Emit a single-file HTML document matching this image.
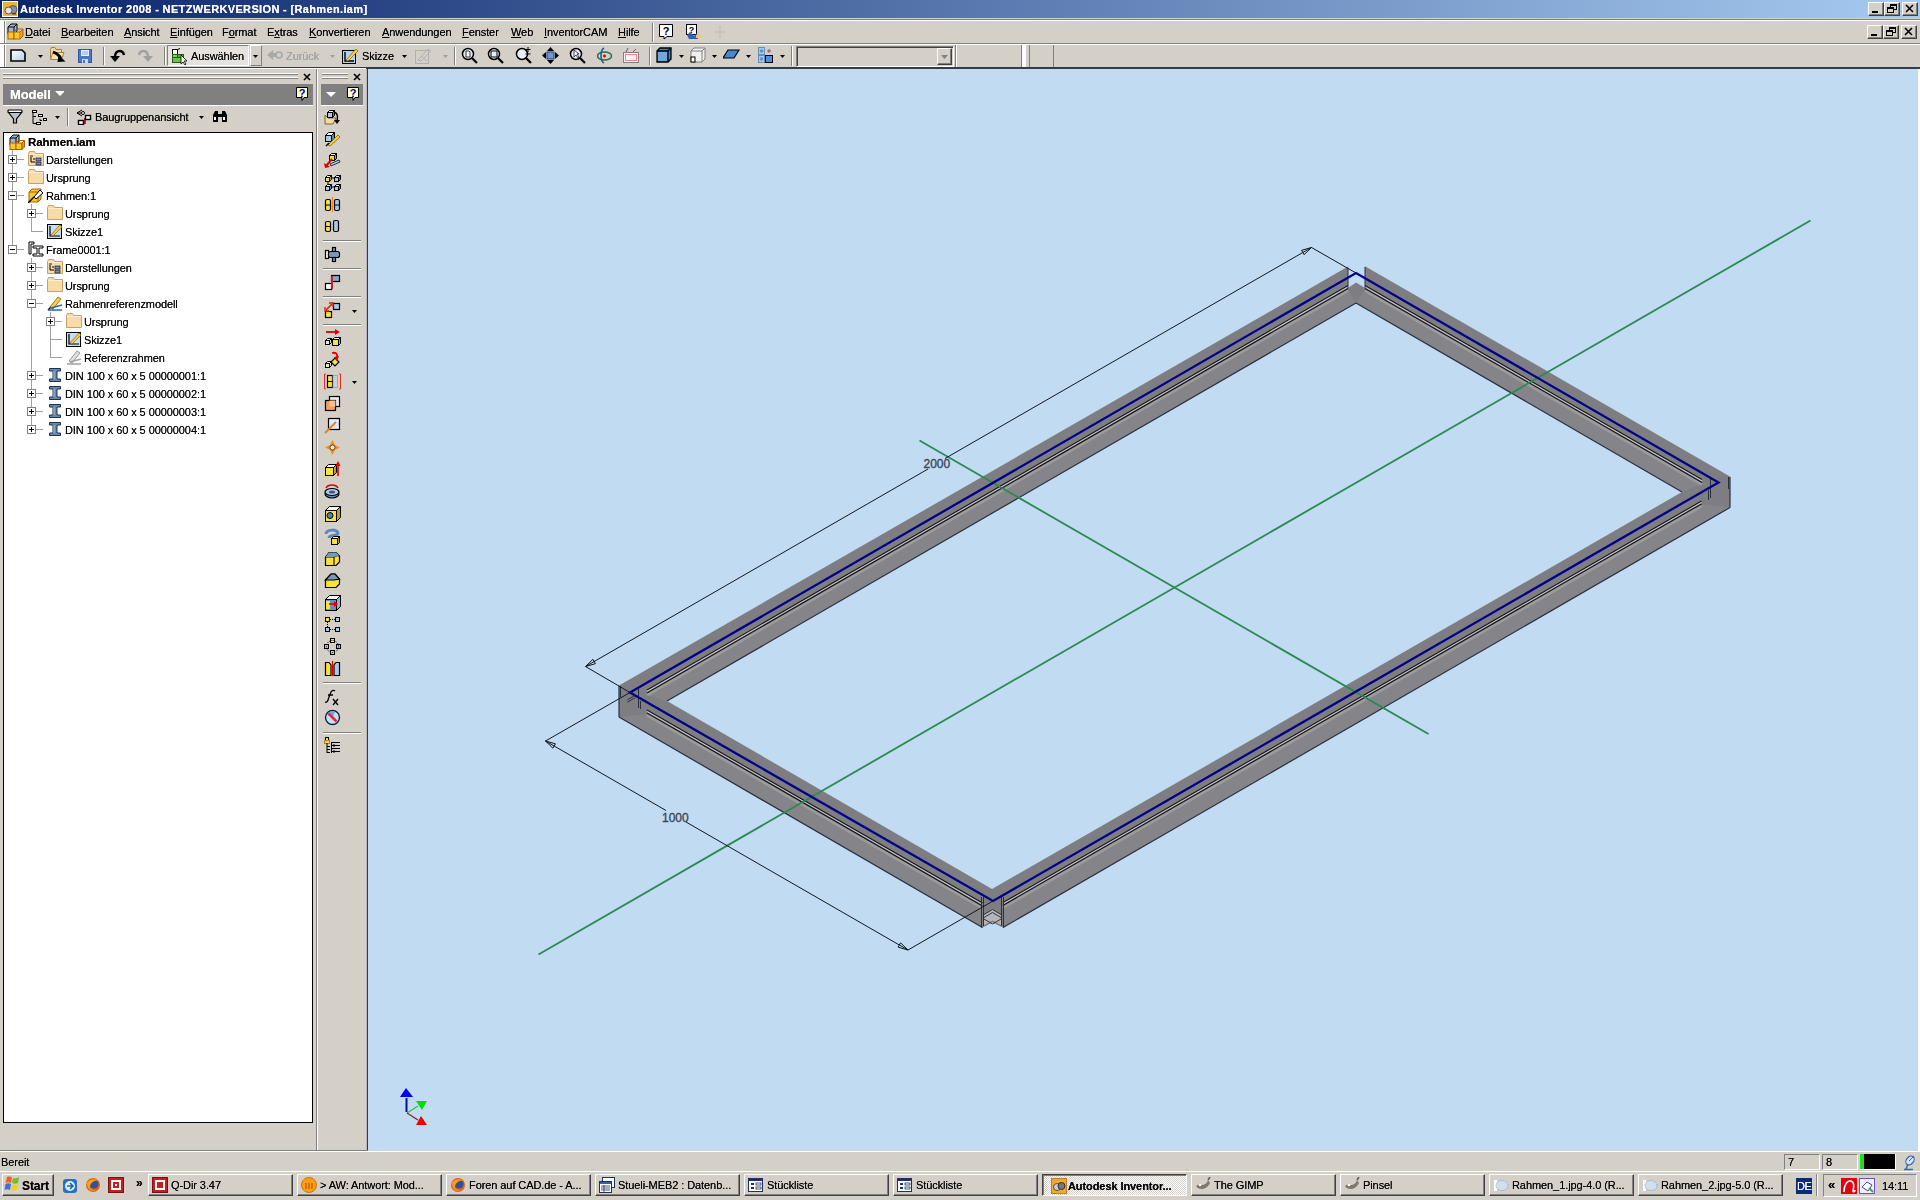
<!DOCTYPE html>
<html><head><meta charset="utf-8">
<style>
*{margin:0;padding:0;box-sizing:border-box}
html,body{width:1920px;height:1200px;overflow:hidden;background:#D4D0C8;font-family:"Liberation Sans",sans-serif;font-size:11px;color:#000}
.a{position:absolute;display:block}
.t{position:absolute;white-space:nowrap;font-size:11px;line-height:13px;letter-spacing:-0.08px}
.ul{text-decoration:underline;text-underline-offset:1px}
.cr{filter:url(#crisp)}
</style></head><body>
<svg width="0" height="0" style="position:absolute"><filter id="crisp" x="0" y="0" width="100%" height="100%"><feComponentTransfer><feFuncA type="table" tableValues="0 0.75 1"/></feComponentTransfer></filter></svg>
<div class="a" style="left:0px;top:0px;width:1920px;height:18px;background:linear-gradient(to right,#0A246A 0%,#A6CAF0 100%)"></div>
<svg class="a" style="left:2px;top:1px;" width="16" height="16" viewBox="0 0 16 16"><rect x="0.5" y="0.5" width="15" height="15" fill="#F0B030" stroke="#fff"/><circle cx="11" cy="8.5" r="4" fill="#8890A0" stroke="#505860"/><circle cx="6.5" cy="9.5" r="3.5" fill="#E8E0F0" stroke="#605070"/><rect x="10" y="12" width="4" height="1.5" fill="#604010"/></svg>
<div class="t cr" style="left:20px;top:3px;color:#fff;font-weight:bold;letter-spacing:0.35px">Autodesk Inventor 2008 - NETZWERKVERSION - [Rahmen.iam]</div>
<div class="a" style="left:1868px;top:2px;width:16px;height:14px;background:#D4D0C8;border-top:1px solid #fff;border-left:1px solid #fff;border-right:1px solid #404040;border-bottom:1px solid #404040"></div>
<div class="a" style="left:1869px;top:14px;width:14px;height:1px;background:#808080"></div>
<div class="a" style="left:1882px;top:3px;width:1px;height:12px;background:#808080"></div>
<div class="a" style="left:1872px;top:11px;width:6px;height:2px;background:#000"></div>
<div class="a" style="left:1884px;top:2px;width:16px;height:14px;background:#D4D0C8;border-top:1px solid #fff;border-left:1px solid #fff;border-right:1px solid #404040;border-bottom:1px solid #404040"></div>
<div class="a" style="left:1885px;top:14px;width:14px;height:1px;background:#808080"></div>
<div class="a" style="left:1898px;top:3px;width:1px;height:12px;background:#808080"></div>
<svg class="a" style="left:1887px;top:4px;" width="10" height="9" viewBox="0 0 10 9"><rect x="3.5" y="0.5" width="6" height="5" fill="none" stroke="#000"/><rect x="3" y="1" width="7" height="1" fill="#000"/><rect x="0.5" y="3.5" width="6" height="5" fill="#D4D0C8" stroke="#000"/><rect x="0" y="4" width="7" height="1" fill="#000"/></svg>
<div class="a" style="left:1902px;top:2px;width:16px;height:14px;background:#D4D0C8;border-top:1px solid #fff;border-left:1px solid #fff;border-right:1px solid #404040;border-bottom:1px solid #404040"></div>
<div class="a" style="left:1903px;top:14px;width:14px;height:1px;background:#808080"></div>
<div class="a" style="left:1916px;top:3px;width:1px;height:12px;background:#808080"></div>
<svg class="a" style="left:1905px;top:4px;" width="10" height="9" viewBox="0 0 10 9"><path d="M1 1 L8 8 M8 1 L1 8" stroke="#000" stroke-width="1.6"/></svg>
<div class="a" style="left:0px;top:18px;width:1920px;height:1px;background:#D4D0C8"></div>
<div class="a" style="left:0px;top:19px;width:1920px;height:1px;background:#808080"></div>
<div class="a" style="left:0px;top:20px;width:1920px;height:1px;background:#fff"></div>
<div class="a" style="left:0px;top:21px;width:4px;height:47px;background:#fff"></div>
<div class="a" style="left:4px;top:21px;width:1px;height:23px;background:#808080"></div>
<div class="a" style="left:5px;top:21px;width:1px;height:23px;background:#fff"></div>
<div class="a" style="left:4px;top:45px;width:1px;height:22px;background:#808080"></div>
<div class="a" style="left:5px;top:45px;width:1px;height:22px;background:#fff"></div>
<div class="a" style="left:0px;top:43px;width:1920px;height:1px;background:#808080"></div>
<div class="a" style="left:0px;top:44px;width:1920px;height:1px;background:#fff"></div>
<svg class="a" style="left:7px;top:23px;" width="17" height="17" viewBox="0 0 17 17"><path d="M1 4 L4 1 L10 1 L10 8 L7 11 L1 11 Z" fill="#9CB8D8" stroke="#000"/><path d="M1 4 L7 4 L7 11 M7 4 L10 1" fill="none" stroke="#000"/><rect x="1" y="9" width="6" height="7" fill="#F8C830" stroke="#B06000"/><rect x="7" y="9" width="6" height="7" fill="#F8C830" stroke="#B06000"/><path d="M13 9 L16 6 L16 13 L13 16" fill="#E0A020" stroke="#B06000"/><path d="M7 9 L10 6 L16 6" fill="none" stroke="#B06000"/></svg>
<div class="t cr" style="left:25px;top:26px;"><span class="ul">D</span>atei</div>
<div class="t cr" style="left:61px;top:26px;"><span class="ul">B</span>earbeiten</div>
<div class="t cr" style="left:124px;top:26px;"><span class="ul">A</span>nsicht</div>
<div class="t cr" style="left:170px;top:26px;"><span class="ul">E</span>infügen</div>
<div class="t cr" style="left:222px;top:26px;">F<span class="ul">o</span>rmat</div>
<div class="t cr" style="left:267px;top:26px;">E<span class="ul">x</span>tras</div>
<div class="t cr" style="left:309px;top:26px;"><span class="ul">K</span>onvertieren</div>
<div class="t cr" style="left:382px;top:26px;"><span class="ul">A</span>nwendungen</div>
<div class="t cr" style="left:462px;top:26px;"><span class="ul">F</span>enster</div>
<div class="t cr" style="left:511px;top:26px;"><span class="ul">W</span>eb</div>
<div class="t cr" style="left:544px;top:26px;"><span class="ul">I</span>nventorCAM</div>
<div class="t cr" style="left:618px;top:26px;"><span class="ul">H</span>ilfe</div>
<div class="a" style="left:652px;top:23px;width:1px;height:19px;background:#808080"></div>
<div class="a" style="left:653px;top:23px;width:1px;height:19px;background:#fff"></div>
<svg class="a" style="left:658px;top:23px;" width="16" height="18" viewBox="0 0 16 18"><path d="M1.5 1.5 H14.5 V13.5 H9 L6 16 V13.5 H1.5 Z" fill="#fff" stroke="#000"/><text x="8" y="11.5" font-family="Liberation Sans" font-weight="bold" font-size="11" text-anchor="middle" fill="#000">?</text></svg>
<svg class="a" style="left:684px;top:23px;" width="18" height="18" viewBox="0 0 18 18"><rect x="2.5" y="1.5" width="10" height="10" fill="#fff" stroke="#000"/><text x="7.5" y="10" font-family="Liberation Sans" font-weight="bold" font-size="9" text-anchor="middle" fill="#000">?</text><path d="M3 12 L6 9 L10 13 L13 10 L14 16 L5 16 Z" fill="#3060B0"/><rect x="12" y="12" width="5" height="3" fill="#F0D040"/></svg>
<svg class="a" style="left:712px;top:24px;" width="16" height="16" viewBox="0 0 16 16"><path d="M8 2 V14 M2 8 H14" stroke="#C8C4BC" stroke-width="2"/></svg>
<div class="a" style="left:1867px;top:25px;width:16px;height:14px;background:#D4D0C8;border-top:1px solid #fff;border-left:1px solid #fff;border-right:1px solid #404040;border-bottom:1px solid #404040"></div>
<div class="a" style="left:1868px;top:37px;width:14px;height:1px;background:#808080"></div>
<div class="a" style="left:1881px;top:26px;width:1px;height:12px;background:#808080"></div>
<div class="a" style="left:1871px;top:34px;width:6px;height:2px;background:#000"></div>
<div class="a" style="left:1883px;top:25px;width:16px;height:14px;background:#D4D0C8;border-top:1px solid #fff;border-left:1px solid #fff;border-right:1px solid #404040;border-bottom:1px solid #404040"></div>
<div class="a" style="left:1884px;top:37px;width:14px;height:1px;background:#808080"></div>
<div class="a" style="left:1897px;top:26px;width:1px;height:12px;background:#808080"></div>
<svg class="a" style="left:1886px;top:27px;" width="10" height="9" viewBox="0 0 10 9"><rect x="3.5" y="0.5" width="6" height="5" fill="none" stroke="#000"/><rect x="3" y="1" width="7" height="1" fill="#000"/><rect x="0.5" y="3.5" width="6" height="5" fill="#D4D0C8" stroke="#000"/><rect x="0" y="4" width="7" height="1" fill="#000"/></svg>
<div class="a" style="left:1901px;top:25px;width:16px;height:14px;background:#D4D0C8;border-top:1px solid #fff;border-left:1px solid #fff;border-right:1px solid #404040;border-bottom:1px solid #404040"></div>
<div class="a" style="left:1902px;top:37px;width:14px;height:1px;background:#808080"></div>
<div class="a" style="left:1915px;top:26px;width:1px;height:12px;background:#808080"></div>
<svg class="a" style="left:1904px;top:27px;" width="10" height="9" viewBox="0 0 10 9"><path d="M1 1 L8 8 M8 1 L1 8" stroke="#000" stroke-width="1.6"/></svg>
<div class="a" style="left:0px;top:67px;width:1920px;height:1px;background:#343A42"></div>
<div class="a" style="left:0px;top:68px;width:368px;height:1px;background:#fff"></div>
<div class="a" style="left:366px;top:68px;width:1554px;height:1px;background:#343C48"></div>
<div class="a" style="left:316px;top:69px;width:1px;height:1082px;background:#808080"></div>
<div class="a" style="left:317px;top:69px;width:1px;height:1082px;background:#fff"></div>
<div class="a" style="left:3px;top:73px;width:295px;height:1px;background:#fff"></div>
<div class="a" style="left:3px;top:74px;width:295px;height:1px;background:#808080"></div>
<div class="a" style="left:3px;top:77px;width:295px;height:1px;background:#fff"></div>
<div class="a" style="left:3px;top:78px;width:295px;height:1px;background:#808080"></div>
<svg class="a" style="left:303px;top:73px;" width="8" height="8" viewBox="0 0 8 8"><path d="M1 1 L7 7 M7 1 L1 7" stroke="#000" stroke-width="1.7"/></svg>
<div class="a" style="left:3px;top:84px;width:310px;height:21px;background:#808080"></div>
<div class="a" style="left:3px;top:105px;width:310px;height:1px;background:#fff"></div>
<div class="t cr" style="left:10px;top:87px;color:#fff;font-weight:bold;font-size:13px;line-height:15px">Modell</div>
<svg class="a" style="left:55px;top:91px;" width="9" height="5" viewBox="0 0 9 5"><path d="M0 0 H10 L5 5 Z" fill="#fff"/></svg>
<svg class="a" style="left:295px;top:86px;" width="14" height="16" viewBox="0 0 14 16"><path d="M1.5 1.5 H12.5 V11.5 H9 L7 14.5 V11.5 H1.5 Z" fill="#FFFFD8" stroke="#000"/><text x="7" y="10.5" font-family="Liberation Sans" font-weight="bold" font-size="11" text-anchor="middle" fill="#000080">?</text></svg>
<div class="a" style="left:322px;top:73px;width:26px;height:1px;background:#fff"></div>
<div class="a" style="left:322px;top:74px;width:26px;height:1px;background:#808080"></div>
<div class="a" style="left:322px;top:77px;width:26px;height:1px;background:#fff"></div>
<div class="a" style="left:322px;top:78px;width:26px;height:1px;background:#808080"></div>
<svg class="a" style="left:353px;top:73px;" width="8" height="8" viewBox="0 0 8 8"><path d="M1 1 L7 7 M7 1 L1 7" stroke="#000" stroke-width="1.7"/></svg>
<div class="a" style="left:321px;top:84px;width:42px;height:21px;background:#808080"></div>
<div class="a" style="left:321px;top:105px;width:42px;height:1px;background:#fff"></div>
<svg class="a" style="left:326px;top:92px;" width="10" height="6" viewBox="0 0 10 6"><path d="M0 0 H10 L5 5 Z" fill="#fff"/></svg>
<svg class="a" style="left:346px;top:86px;" width="14" height="16" viewBox="0 0 14 16"><path d="M1.5 1.5 H12.5 V11.5 H9 L7 14.5 V11.5 H1.5 Z" fill="#FFFFD8" stroke="#000"/><text x="7" y="10.5" font-family="Liberation Sans" font-weight="bold" font-size="11" text-anchor="middle" fill="#000080">?</text></svg>
<div class="a" style="left:366px;top:69px;width:1px;height:1082px;background:#B8B8B8"></div>
<div class="a" style="left:367px;top:69px;width:1px;height:1082px;background:#343A44"></div>
<div class="a" style="left:3px;top:132px;width:310px;height:991px;background:#fff;border:1px solid #000"></div>
<div class="a" style="left:368px;top:69px;width:1550px;height:1081px;background:#C1DBF3"></div>
<div class="a" style="left:1918px;top:69px;width:2px;height:1082px;background:#fff"></div>
<div class="a" style="left:0px;top:1150px;width:368px;height:1px;background:#808080"></div>
<div class="a" style="left:368px;top:1150px;width:1550px;height:1px;background:#C8D4DC"></div>
<div class="a" style="left:0px;top:1151px;width:1920px;height:1px;background:#fff"></div>
<div class="t cr" style="left:1px;top:1156px;">Bereit</div>
<div class="a" style="left:1784px;top:1154px;width:36px;height:16px;border-top:1px solid #808080;border-left:1px solid #808080;border-right:1px solid #fff;border-bottom:1px solid #fff"></div>
<div class="t cr" style="left:1788px;top:1156px;">7</div>
<div class="a" style="left:1822px;top:1154px;width:36px;height:16px;border-top:1px solid #808080;border-left:1px solid #808080;border-right:1px solid #fff;border-bottom:1px solid #fff"></div>
<div class="t cr" style="left:1826px;top:1156px;">8</div>
<div class="a" style="left:1860px;top:1154px;width:36px;height:16px;background:#000;border-right:1px solid #fff;border-bottom:1px solid #fff"></div>
<div class="a" style="left:1860px;top:1154px;width:4px;height:15px;background:#20E020"></div>
<div class="a" style="left:0px;top:1171px;width:1920px;height:1px;background:#fff"></div>
<svg class="a" style="left:10px;top:49px;" width="16" height="13" viewBox="0 0 16 13"><defs><linearGradient id="gpage" x1="0" y1="0" x2="1" y2="1"><stop offset="0" stop-color="#fff"/><stop offset="1" stop-color="#B8CCE8"/></linearGradient></defs><path d="M1 1 H12 L15 4 V12 H1 Z" fill="url(#gpage)" stroke="#000" stroke-width="1.6"/></svg>
<svg class="a" style="left:38px;top:55px;" width="5" height="3" viewBox="0 0 5 3"><path d="M0 0 H5 L2.5 3 Z" fill="#000"/></svg>
<svg class="a" style="left:50px;top:47px;" width="16" height="16" viewBox="0 0 16 16"><path d="M0.5 2.5 L1.5 0.5 H5 L6 2.5 H11.5 V12.5 H0.5 Z" fill="#F0D8A0" stroke="#A88040"/><path d="M0.5 12.5 L3 5.5 H14 L11.5 12.5 Z" fill="#F8E4B8" stroke="#A88040"/><path d="M3 5 C6 6 9 8 11 11" stroke="#000" stroke-width="2.4" fill="none"/><path d="M8.5 8 L15.5 14.5 L7.5 15 Z" fill="#000"/></svg>
<svg class="a" style="left:78px;top:49px;" width="14" height="14" viewBox="0 0 14 14"><rect x="0.5" y="0.5" width="13" height="13" fill="#4878C8" stroke="#3058A8"/><rect x="3" y="1" width="8" height="6" fill="#E8F0F8"/><path d="M4 3 H10 M4 5 H10" stroke="#90A8D0"/><rect x="4" y="10" width="6" height="4" fill="#C8D8F0"/><rect x="5" y="11" width="2" height="3" fill="#4878C8"/></svg>
<div class="a" style="left:103px;top:47px;width:1px;height:18px;background:#808080"></div>
<div class="a" style="left:104px;top:47px;width:1px;height:18px;background:#fff"></div>
<svg class="a" style="left:110px;top:49px;" width="16" height="14" viewBox="0 0 16 14"><path d="M14 6 C13 1 6 0 5 7" stroke="#000" stroke-width="2.4" fill="none"/><path d="M0 7 L10 7 L5 13 Z" fill="#000"/></svg>
<svg class="a" style="left:137px;top:49px;" width="16" height="14" viewBox="0 0 16 14"><path d="M2 6 C3 1 10 0 11 7" stroke="#A0A0A0" stroke-width="2.4" fill="none"/><path d="M16 7 L6 7 L11 13 Z" fill="#A0A0A0"/></svg>
<div class="a" style="left:164px;top:47px;width:1px;height:18px;background:#808080"></div>
<div class="a" style="left:165px;top:47px;width:1px;height:18px;background:#fff"></div>
<div class="a" style="left:167px;top:45px;width:82px;height:21px;border-top:1px solid #808080;border-left:1px solid #808080;border-right:1px solid #fff;border-bottom:1px solid #fff;background:#E6E3DE"></div>
<div class="a" style="left:250px;top:45px;width:12px;height:21px;border-top:1px solid #fff;border-left:1px solid #fff;border-right:1px solid #808080;border-bottom:1px solid #808080"></div>
<svg class="a" style="left:171px;top:48px;" width="17" height="17" viewBox="0 0 17 17"><rect x="1.5" y="1.5" width="5" height="5" fill="#fff" stroke="#000"/><path d="M6.5 1.5 L9 0.5" stroke="#000"/><rect x="1.5" y="6.5" width="5" height="7" fill="#80D060" stroke="#206010"/><rect x="6.5" y="6.5" width="6" height="7" fill="#60B040" stroke="#206010"/><rect x="1.5" y="9.5" width="11" height="5" fill="#70C050" stroke="#206010"/><path d="M10 7 L10 16 L12 14 L14 17 L15 16 L13 13 L16 13 Z" fill="#fff" stroke="#000" stroke-width="0.8"/></svg>
<div class="t cr" style="left:191px;top:50px;">Auswählen</div>
<svg class="a" style="left:253px;top:55px;" width="5" height="3" viewBox="0 0 5 3"><path d="M0 0 H5 L2.5 3 Z" fill="#000"/></svg>
<svg class="a" style="left:267px;top:49px;" width="16" height="12" viewBox="0 0 16 12"><path d="M0 6 L6 1 V4 H9 V8 H6 V11 Z" fill="#A8A8A8"/><circle cx="12" cy="6" r="3" fill="none" stroke="#A8A8A8" stroke-width="1.6"/></svg>
<div class="t cr" style="left:286px;top:50px;color:#A0A0A0">Zurück</div>
<svg class="a" style="left:330px;top:55px;" width="5" height="3" viewBox="0 0 5 3"><path d="M0 0 H5 L2.5 3 Z" fill="#A0A0A0"/></svg>
<svg class="a" style="left:342px;top:47px;" width="17" height="17" viewBox="0 0 17 17"><rect x="0.5" y="3.5" width="13" height="13" fill="#B8D0F0" stroke="#000"/><path d="M3 5 V14 H12" stroke="#000" stroke-width="1.4" fill="none"/><path d="M4 13 L14 2 L16 4 L6 14 Z" fill="#F8D040" stroke="#806000" stroke-width="0.7"/></svg>
<div class="t cr" style="left:362px;top:50px;">Skizze</div>
<svg class="a" style="left:402px;top:55px;" width="5" height="3" viewBox="0 0 5 3"><path d="M0 0 H5 L2.5 3 Z" fill="#000"/></svg>
<svg class="a" style="left:415px;top:47px;" width="17" height="17" viewBox="0 0 17 17"><rect x="0.5" y="3.5" width="13" height="13" fill="none" stroke="#B0B0B0"/><path d="M3 13 L13 2 L16 4 L6 14 Z" fill="none" stroke="#B0B0B0"/><path d="M6 9 L12 14" stroke="#B0B0B0"/></svg>
<svg class="a" style="left:443px;top:55px;" width="5" height="3" viewBox="0 0 5 3"><path d="M0 0 H5 L2.5 3 Z" fill="#A0A0A0"/></svg>
<div class="a" style="left:454px;top:47px;width:1px;height:18px;background:#808080"></div>
<div class="a" style="left:455px;top:47px;width:1px;height:18px;background:#fff"></div>
<svg class="a" style="left:461px;top:47px;" width="17" height="17" viewBox="0 0 17 17"><circle cx="7" cy="7" r="5.5" fill="#E8EEF8" stroke="#000" stroke-width="1.5"/><path d="M11 11 L16 16" stroke="#000" stroke-width="2.2"/><path d="M5 4 H8 L9 5 V10 H5 Z" fill="#fff" stroke="#000" stroke-width="0.8"/></svg>
<svg class="a" style="left:487px;top:47px;" width="17" height="17" viewBox="0 0 17 17"><circle cx="7" cy="7" r="5.5" fill="#E8EEF8" stroke="#000" stroke-width="1.5"/><path d="M11 11 L16 16" stroke="#000" stroke-width="2.2"/><rect x="4" y="4" width="6" height="6" fill="none" stroke="#000" stroke-width="1"/></svg>
<svg class="a" style="left:515px;top:47px;" width="17" height="17" viewBox="0 0 17 17"><circle cx="7" cy="7" r="5.5" fill="#E8EEF8" stroke="#000" stroke-width="1.5"/><path d="M11 11 L16 16" stroke="#000" stroke-width="2.2"/><path d="M13 0 V5 M10.5 2.5 H15.5 M10.5 7 H15.5" stroke="#000" stroke-width="1"/></svg>
<svg class="a" style="left:542px;top:47px;" width="17" height="17" viewBox="0 0 17 17"><path d="M8.5 0 L12 4 H5 Z M8.5 17 L12 13 H5 Z M0 8.5 L4 5 V12 Z M17 8.5 L13 5 V12 Z" fill="#000"/><rect x="5" y="5" width="7" height="7" fill="#7098D0" stroke="#204080"/></svg>
<svg class="a" style="left:569px;top:47px;" width="17" height="17" viewBox="0 0 17 17"><circle cx="7" cy="7" r="5.5" fill="#E8EEF8" stroke="#000" stroke-width="1.5"/><path d="M11 11 L16 16" stroke="#000" stroke-width="2.2"/><path d="M5 3 L5 10 L7 8 L9 11 L10 10 L8 7 L10 7 Z" fill="#fff" stroke="#000" stroke-width="0.7"/></svg>
<svg class="a" style="left:596px;top:47px;" width="17" height="17" viewBox="0 0 17 17"><ellipse cx="8.5" cy="9" rx="7" ry="4" fill="none" stroke="#207050" stroke-width="1.5"/><path d="M8 1 C4 3 4 14 8 16" stroke="#2060A0" stroke-width="1.6" fill="none"/><path d="M7 9 H10 M8.5 7.5 V10.5" stroke="#E00000" stroke-width="1.5"/></svg>
<svg class="a" style="left:623px;top:47px;" width="17" height="17" viewBox="0 0 17 17"><rect x="0.5" y="5.5" width="15" height="10" fill="#F4F4F4" stroke="#808080"/><rect x="2.5" y="7.5" width="11" height="6" fill="none" stroke="#E02020" stroke-dasharray="1 1"/><path d="M3 5 L5 1 M10 5 L13 2" stroke="#606060"/></svg>
<div class="a" style="left:649px;top:47px;width:1px;height:18px;background:#808080"></div>
<div class="a" style="left:650px;top:47px;width:1px;height:18px;background:#fff"></div>
<svg class="a" style="left:656px;top:47px;" width="17" height="17" viewBox="0 0 17 17"><path d="M1 4 L4 1 H15 V12 L12 15 H1 Z" fill="#3C80C8" stroke="#000" stroke-width="1.3"/><path d="M1 4 H12 V15 M12 4 L15 1" stroke="#000" stroke-width="1.3" fill="none"/><path d="M2 5 H11 V14 H2 Z" fill="#70A8E0"/></svg>
<svg class="a" style="left:679px;top:55px;" width="5" height="3" viewBox="0 0 5 3"><path d="M0 0 H5 L2.5 3 Z" fill="#000"/></svg>
<svg class="a" style="left:690px;top:47px;" width="17" height="17" viewBox="0 0 17 17"><path d="M1 4 L4 1 H15 V12 L12 15 H1 Z" fill="#F0F0F0" stroke="#808080"/><path d="M1 4 H12 V15 M12 4 L15 1" stroke="#808080" fill="none"/><rect x="1" y="10" width="4" height="5" fill="#fff" stroke="#000"/></svg>
<svg class="a" style="left:712px;top:55px;" width="5" height="3" viewBox="0 0 5 3"><path d="M0 0 H5 L2.5 3 Z" fill="#000"/></svg>
<svg class="a" style="left:723px;top:49px;" width="17" height="12" viewBox="0 0 17 12"><path d="M5 1 H16 L11 9 H0 Z" fill="#4888D0" stroke="#000" stroke-width="1.2"/></svg>
<svg class="a" style="left:746px;top:55px;" width="5" height="3" viewBox="0 0 5 3"><path d="M0 0 H5 L2.5 3 Z" fill="#000"/></svg>
<svg class="a" style="left:758px;top:47px;" width="16" height="17" viewBox="0 0 16 17"><rect x="0.5" y="0.5" width="6" height="7" fill="#A8C8E8" stroke="#6090C0"/><rect x="0.5" y="8.5" width="6" height="7" fill="#A8C8E8" stroke="#6090C0"/><circle cx="3.5" cy="4" r="1.8" fill="#7090B0"/><circle cx="3.5" cy="12" r="1.8" fill="#7090B0"/><circle cx="11" cy="4" r="1.8" fill="#808080"/><rect x="7.5" y="8.5" width="7" height="7" fill="#5090D8" stroke="#000"/></svg>
<svg class="a" style="left:780px;top:55px;" width="5" height="3" viewBox="0 0 5 3"><path d="M0 0 H5 L2.5 3 Z" fill="#000"/></svg>
<div class="a" style="left:791px;top:46px;width:1px;height:20px;background:#808080"></div>
<div class="a" style="left:792px;top:46px;width:1px;height:20px;background:#fff"></div>
<div class="a" style="left:796px;top:46px;width:158px;height:21px;border-top:1px solid #808080;border-left:1px solid #808080;border-right:1px solid #fff;border-bottom:1px solid #fff"></div>
<div class="a" style="left:797px;top:47px;width:156px;height:1px;background:#404040"></div>
<div class="a" style="left:797px;top:47px;width:1px;height:19px;background:#404040"></div>
<div class="a" style="left:937px;top:48px;width:15px;height:17px;background:#D4D0C8;border-top:1px solid #fff;border-left:1px solid #fff;border-right:1px solid #404040;border-bottom:1px solid #404040"></div>
<div class="a" style="left:938px;top:63px;width:13px;height:1px;background:#808080"></div>
<div class="a" style="left:950px;top:49px;width:1px;height:15px;background:#808080"></div>
<svg class="a" style="left:941px;top:55px;" width="7" height="4" viewBox="0 0 7 4"><path d="M0 0 H7 L3.5 4 Z" fill="#808080"/></svg>
<div class="a" style="left:955px;top:45px;width:1px;height:22px;background:#808080"></div>
<div class="a" style="left:956px;top:45px;width:1px;height:22px;background:#fff"></div>
<div class="a" style="left:1021px;top:45px;width:1px;height:22px;background:#808080"></div>
<div class="a" style="left:1022px;top:45px;width:1px;height:22px;background:#fff"></div>
<div class="a" style="left:1023px;top:45px;width:3px;height:22px;background:#fff"></div>
<div class="a" style="left:1029px;top:45px;width:1px;height:22px;background:#808080"></div>
<div class="a" style="left:1053px;top:45px;width:1px;height:22px;background:#808080"></div>
<svg class="a" style="left:7px;top:109px;" width="16" height="16" viewBox="0 0 16 16"><rect x="1" y="1" width="14" height="2.5" rx="1" fill="#fff" stroke="#000" stroke-width="1.2"/><path d="M1.5 3.5 L6.5 10 V14 H9.5 V10 L14.5 3.5 Z" fill="#C0C0C4" stroke="#000" stroke-width="1.2"/></svg>
<svg class="a" style="left:32px;top:110px;" width="16" height="15" viewBox="0 0 16 15"><rect x="0.5" y="0.5" width="4" height="2" fill="#fff" stroke="#000"/><path d="M1 3 V13.5 H4 M1 6.5 H4 M8 9 V10.5 H10" stroke="#000" fill="none"/><rect x="6.5" y="4.5" width="4" height="2" fill="#fff" stroke="#000"/><rect x="11.5" y="8.5" width="3" height="2" fill="#fff" stroke="#000"/><rect x="4.5" y="12.5" width="4" height="2" fill="#fff" stroke="#000"/></svg>
<svg class="a" style="left:55px;top:116px;" width="5" height="3" viewBox="0 0 5 3"><path d="M0 0 H5 L2.5 3 Z" fill="#000"/></svg>
<div class="a" style="left:67px;top:108px;width:1px;height:18px;background:#808080"></div>
<div class="a" style="left:68px;top:108px;width:1px;height:18px;background:#fff"></div>
<svg class="a" style="left:76px;top:109px;" width="16" height="16" viewBox="0 0 16 16"><path d="M1 4 L6 1 M1 4 L6 7 M1 4 H7" stroke="#000" fill="none"/><circle cx="7" cy="4" r="1.5" fill="#fff" stroke="#000"/><path d="M9 9 V15" stroke="#C02040" stroke-width="2"/><rect x="9.5" y="6.5" width="5" height="4" fill="#fff" stroke="#000" stroke-width="1.4"/><rect x="2.5" y="11.5" width="5" height="4" fill="#fff" stroke="#000" stroke-width="1.4"/></svg>
<div class="t cr" style="left:95px;top:111px;">Baugruppenansicht</div>
<svg class="a" style="left:199px;top:116px;" width="5" height="3" viewBox="0 0 5 3"><path d="M0 0 H5 L2.5 3 Z" fill="#000"/></svg>
<svg class="a" style="left:212px;top:110px;" width="16" height="13" viewBox="0 0 16 13"><path d="M1 5 L3 1 H6 V12 H1 Z M15 5 L13 1 H10 V12 H15 Z" fill="#000"/><rect x="6" y="4" width="4" height="3" fill="#000"/><rect x="2" y="7" width="2" height="3" fill="#fff"/><rect x="11" y="7" width="2" height="3" fill="#fff"/></svg>
<div class="a" style="left:12px;top:150px;width:1px;height:100px;background:#A0A0A0"></div>
<div class="a" style="left:31px;top:204px;width:1px;height:28px;background:#A0A0A0"></div>
<div class="a" style="left:31px;top:258px;width:1px;height:172px;background:#A0A0A0"></div>
<div class="a" style="left:50px;top:312px;width:1px;height:46px;background:#A0A0A0"></div>
<svg class="a" style="left:9px;top:134px;" width="16" height="16" viewBox="0 0 16 16"><path d="M1 4 L4 1 L10 1 L10 8 L7 11 L1 11 Z" fill="#9CB8D8" stroke="#000"/><path d="M1 4 L7 4 L7 11 M7 4 L10 1" fill="none" stroke="#000"/><rect x="1" y="9" width="6" height="6.5" fill="#F8C830" stroke="#B06000"/><rect x="7" y="9" width="6" height="6.5" fill="#F8C830" stroke="#B06000"/><path d="M13 9 L15.5 6.5 L15.5 13 L13 15.5 Z" fill="#E0A020" stroke="#B06000"/><path d="M7 9 L9.5 6.5 L15.5 6.5" fill="none" stroke="#B06000"/></svg>
<div class="t cr" style="left:28px;top:136px;"><b style="font-size:11.5px">Rahmen.iam</b></div>
<div class="a" style="left:12px;top:159px;width:12px;height:1px;background:#A0A0A0"></div>
<div class="a" style="left:8px;top:155px;width:9px;height:9px;background:#fff;border:1px solid #808080"></div>
<div class="a" style="left:10px;top:159px;width:5px;height:1px;background:#000"></div>
<div class="a" style="left:12px;top:157px;width:1px;height:5px;background:#000"></div>
<svg class="a" style="left:28px;top:151px;" width="16" height="16" viewBox="0 0 16 16"><path d="M0.5 2.5 L1.5 0.5 H6.5 L7.5 2.5 H15.5 V14.5 H0.5 Z" fill="#F8DCA8" stroke="#C8A060"/><path d="M1 3.5 H15" stroke="#FFF0D0"/><rect x="2" y="4" width="3" height="2" fill="#808080"/><path d="M3 6 V11 H7 M5 8 H7" stroke="#000" fill="none"/><rect x="8" y="7" width="5" height="3" fill="#6890B8" stroke="#000" stroke-width="0.6"/><rect x="8" y="11" width="5" height="3" fill="#6890B8" stroke="#000" stroke-width="0.6"/></svg>
<div class="t cr" style="left:46px;top:154px;">Darstellungen</div>
<div class="a" style="left:12px;top:177px;width:12px;height:1px;background:#A0A0A0"></div>
<div class="a" style="left:8px;top:173px;width:9px;height:9px;background:#fff;border:1px solid #808080"></div>
<div class="a" style="left:10px;top:177px;width:5px;height:1px;background:#000"></div>
<div class="a" style="left:12px;top:175px;width:1px;height:5px;background:#000"></div>
<svg class="a" style="left:28px;top:169px;" width="16" height="16" viewBox="0 0 16 16"><path d="M0.5 2.5 L1.5 0.5 H6.5 L7.5 2.5 H15.5 V14.5 H0.5 Z" fill="#F8DCA8" stroke="#C8A060"/><path d="M1 3.5 H15" stroke="#FFF0D0"/></svg>
<div class="t cr" style="left:46px;top:172px;">Ursprung</div>
<div class="a" style="left:12px;top:195px;width:12px;height:1px;background:#A0A0A0"></div>
<div class="a" style="left:8px;top:191px;width:9px;height:9px;background:#fff;border:1px solid #808080"></div>
<div class="a" style="left:10px;top:195px;width:5px;height:1px;background:#000"></div>
<svg class="a" style="left:28px;top:187px;" width="16" height="16" viewBox="0 0 16 16"><path d="M1 5 L4 2 H13 V12 L10 15 H1 Z" fill="#F8C830" stroke="#B06000"/><path d="M1 5 H10 V15 M10 5 L13 2" stroke="#B06000" fill="none"/><path d="M6 10 L12 3 L15 6 L8 12 Z" fill="#fff" stroke="#000"/><path d="M0 16 L6 10" stroke="#000" stroke-width="1.4"/></svg>
<div class="t cr" style="left:46px;top:190px;">Rahmen:1</div>
<div class="a" style="left:31px;top:213px;width:12px;height:1px;background:#A0A0A0"></div>
<div class="a" style="left:27px;top:209px;width:9px;height:9px;background:#fff;border:1px solid #808080"></div>
<div class="a" style="left:29px;top:213px;width:5px;height:1px;background:#000"></div>
<div class="a" style="left:31px;top:211px;width:1px;height:5px;background:#000"></div>
<svg class="a" style="left:47px;top:205px;" width="16" height="16" viewBox="0 0 16 16"><path d="M0.5 2.5 L1.5 0.5 H6.5 L7.5 2.5 H15.5 V14.5 H0.5 Z" fill="#F8DCA8" stroke="#C8A060"/><path d="M1 3.5 H15" stroke="#FFF0D0"/></svg>
<div class="t cr" style="left:65px;top:208px;">Ursprung</div>
<div class="a" style="left:31px;top:231px;width:12px;height:1px;background:#A0A0A0"></div>
<svg class="a" style="left:47px;top:223px;" width="16" height="16" viewBox="0 0 16 16"><rect x="0.5" y="1.5" width="14" height="14" fill="#C8DCF4" stroke="#000"/><path d="M3 3 V13 H13" stroke="#000" stroke-width="1.2" fill="none"/><path d="M4 12 L13 2 L15 4 L6 13 Z" fill="#F8D040" stroke="#806000" stroke-width="0.7"/></svg>
<div class="t cr" style="left:65px;top:226px;">Skizze1</div>
<div class="a" style="left:12px;top:249px;width:12px;height:1px;background:#A0A0A0"></div>
<div class="a" style="left:8px;top:245px;width:9px;height:9px;background:#fff;border:1px solid #808080"></div>
<div class="a" style="left:10px;top:249px;width:5px;height:1px;background:#000"></div>
<svg class="a" style="left:28px;top:241px;" width="16" height="16" viewBox="0 0 16 16"><path d="M1 1 H6 V3 H3 V13 H1 Z" fill="#fff" stroke="#000"/><path d="M5 5 H15 V7 H11 V13 H15 V15 H5 V13 H9 V7 H5 Z" fill="#fff" stroke="#000"/></svg>
<div class="t cr" style="left:46px;top:244px;">Frame0001:1</div>
<div class="a" style="left:31px;top:267px;width:12px;height:1px;background:#A0A0A0"></div>
<div class="a" style="left:27px;top:263px;width:9px;height:9px;background:#fff;border:1px solid #808080"></div>
<div class="a" style="left:29px;top:267px;width:5px;height:1px;background:#000"></div>
<div class="a" style="left:31px;top:265px;width:1px;height:5px;background:#000"></div>
<svg class="a" style="left:47px;top:259px;" width="16" height="16" viewBox="0 0 16 16"><path d="M0.5 2.5 L1.5 0.5 H6.5 L7.5 2.5 H15.5 V14.5 H0.5 Z" fill="#F8DCA8" stroke="#C8A060"/><path d="M1 3.5 H15" stroke="#FFF0D0"/><rect x="2" y="4" width="3" height="2" fill="#808080"/><path d="M3 6 V11 H7 M5 8 H7" stroke="#000" fill="none"/><rect x="8" y="7" width="5" height="3" fill="#6890B8" stroke="#000" stroke-width="0.6"/><rect x="8" y="11" width="5" height="3" fill="#6890B8" stroke="#000" stroke-width="0.6"/></svg>
<div class="t cr" style="left:65px;top:262px;">Darstellungen</div>
<div class="a" style="left:31px;top:285px;width:12px;height:1px;background:#A0A0A0"></div>
<div class="a" style="left:27px;top:281px;width:9px;height:9px;background:#fff;border:1px solid #808080"></div>
<div class="a" style="left:29px;top:285px;width:5px;height:1px;background:#000"></div>
<div class="a" style="left:31px;top:283px;width:1px;height:5px;background:#000"></div>
<svg class="a" style="left:47px;top:277px;" width="16" height="16" viewBox="0 0 16 16"><path d="M0.5 2.5 L1.5 0.5 H6.5 L7.5 2.5 H15.5 V14.5 H0.5 Z" fill="#F8DCA8" stroke="#C8A060"/><path d="M1 3.5 H15" stroke="#FFF0D0"/></svg>
<div class="t cr" style="left:65px;top:280px;">Ursprung</div>
<div class="a" style="left:31px;top:303px;width:12px;height:1px;background:#A0A0A0"></div>
<div class="a" style="left:27px;top:299px;width:9px;height:9px;background:#fff;border:1px solid #808080"></div>
<div class="a" style="left:29px;top:303px;width:5px;height:1px;background:#000"></div>
<svg class="a" style="left:47px;top:295px;" width="16" height="16" viewBox="0 0 16 16"><path d="M1 15 L12 4" stroke="#000" stroke-width="1.4"/><path d="M3 12 L11 2 L14 4 L6 14 Z" fill="#F8D040" stroke="#806000" stroke-width="0.8"/><path d="M1 15 L15 15 M4 13 L15 10" stroke="#3060B0" stroke-width="1.4"/></svg>
<div class="t cr" style="left:65px;top:298px;">Rahmenreferenzmodell</div>
<div class="a" style="left:50px;top:321px;width:12px;height:1px;background:#A0A0A0"></div>
<div class="a" style="left:46px;top:317px;width:9px;height:9px;background:#fff;border:1px solid #808080"></div>
<div class="a" style="left:48px;top:321px;width:5px;height:1px;background:#000"></div>
<div class="a" style="left:50px;top:319px;width:1px;height:5px;background:#000"></div>
<svg class="a" style="left:66px;top:313px;" width="16" height="16" viewBox="0 0 16 16"><path d="M0.5 2.5 L1.5 0.5 H6.5 L7.5 2.5 H15.5 V14.5 H0.5 Z" fill="#F8DCA8" stroke="#C8A060"/><path d="M1 3.5 H15" stroke="#FFF0D0"/></svg>
<div class="t cr" style="left:84px;top:316px;">Ursprung</div>
<div class="a" style="left:50px;top:339px;width:12px;height:1px;background:#A0A0A0"></div>
<svg class="a" style="left:66px;top:331px;" width="16" height="16" viewBox="0 0 16 16"><rect x="0.5" y="1.5" width="14" height="14" fill="#C8DCF4" stroke="#000"/><path d="M3 3 V13 H13" stroke="#000" stroke-width="1.2" fill="none"/><path d="M4 12 L13 2 L15 4 L6 13 Z" fill="#F8D040" stroke="#806000" stroke-width="0.7"/></svg>
<div class="t cr" style="left:84px;top:334px;">Skizze1</div>
<div class="a" style="left:50px;top:357px;width:12px;height:1px;background:#A0A0A0"></div>
<svg class="a" style="left:66px;top:349px;" width="16" height="16" viewBox="0 0 16 16"><path d="M3 12 L11 2 L14 4 L6 14 Z" fill="#E0E0E0" stroke="#808080" stroke-width="0.8"/><path d="M1 15 L15 15 M4 13 L15 10" stroke="#A0A0A0" stroke-width="1.4"/></svg>
<div class="t cr" style="left:84px;top:352px;">Referenzrahmen</div>
<div class="a" style="left:31px;top:375px;width:12px;height:1px;background:#A0A0A0"></div>
<div class="a" style="left:27px;top:371px;width:9px;height:9px;background:#fff;border:1px solid #808080"></div>
<div class="a" style="left:29px;top:375px;width:5px;height:1px;background:#000"></div>
<div class="a" style="left:31px;top:373px;width:1px;height:5px;background:#000"></div>
<svg class="a" style="left:47px;top:367px;" width="16" height="16" viewBox="0 0 16 16"><path d="M2.5 1.5 H13.5 V4 H10 V12 H13.5 V14.5 H2.5 V12 H6 V4 H2.5 Z" fill="#6888B0" stroke="#203050"/><path d="M7 4 V12" stroke="#A8C0E0"/></svg>
<div class="t cr" style="left:65px;top:370px;">DIN 100 x 60 x 5 00000001:1</div>
<div class="a" style="left:31px;top:393px;width:12px;height:1px;background:#A0A0A0"></div>
<div class="a" style="left:27px;top:389px;width:9px;height:9px;background:#fff;border:1px solid #808080"></div>
<div class="a" style="left:29px;top:393px;width:5px;height:1px;background:#000"></div>
<div class="a" style="left:31px;top:391px;width:1px;height:5px;background:#000"></div>
<svg class="a" style="left:47px;top:385px;" width="16" height="16" viewBox="0 0 16 16"><path d="M2.5 1.5 H13.5 V4 H10 V12 H13.5 V14.5 H2.5 V12 H6 V4 H2.5 Z" fill="#6888B0" stroke="#203050"/><path d="M7 4 V12" stroke="#A8C0E0"/></svg>
<div class="t cr" style="left:65px;top:388px;">DIN 100 x 60 x 5 00000002:1</div>
<div class="a" style="left:31px;top:411px;width:12px;height:1px;background:#A0A0A0"></div>
<div class="a" style="left:27px;top:407px;width:9px;height:9px;background:#fff;border:1px solid #808080"></div>
<div class="a" style="left:29px;top:411px;width:5px;height:1px;background:#000"></div>
<div class="a" style="left:31px;top:409px;width:1px;height:5px;background:#000"></div>
<svg class="a" style="left:47px;top:403px;" width="16" height="16" viewBox="0 0 16 16"><path d="M2.5 1.5 H13.5 V4 H10 V12 H13.5 V14.5 H2.5 V12 H6 V4 H2.5 Z" fill="#6888B0" stroke="#203050"/><path d="M7 4 V12" stroke="#A8C0E0"/></svg>
<div class="t cr" style="left:65px;top:406px;">DIN 100 x 60 x 5 00000003:1</div>
<div class="a" style="left:31px;top:429px;width:12px;height:1px;background:#A0A0A0"></div>
<div class="a" style="left:27px;top:425px;width:9px;height:9px;background:#fff;border:1px solid #808080"></div>
<div class="a" style="left:29px;top:429px;width:5px;height:1px;background:#000"></div>
<div class="a" style="left:31px;top:427px;width:1px;height:5px;background:#000"></div>
<svg class="a" style="left:47px;top:421px;" width="16" height="16" viewBox="0 0 16 16"><path d="M2.5 1.5 H13.5 V4 H10 V12 H13.5 V14.5 H2.5 V12 H6 V4 H2.5 Z" fill="#6888B0" stroke="#203050"/><path d="M7 4 V12" stroke="#A8C0E0"/></svg>
<div class="t cr" style="left:65px;top:424px;">DIN 100 x 60 x 5 00000004:1</div>
<svg class="a" style="left:368px;top:69px" width="1550" height="1081" viewBox="368 69 1550 1081"><path d="M619,685.5 1348,266.6 1348,288 1356,282.5 1365,288 1365,266.2 1730,476.5 1730,507.5 1003,927.5 992.5,922.5 982.5,927.5 619,717 Z M1356,303 1682,492 992,889 667,701 Z" fill="#7E7E82" fill-rule="evenodd"/><polygon points="1365,290 1702,484 1682,492 1356,303" fill="#858589"/><polygon points="1348,290 646,695 667,701 1356,303" fill="#858589"/><polygon points="647,714 982.5,907 982.5,927.5 619,717" fill="#858589"/><polygon points="1003,907 1701,504 1730,507.5 1003,927.5" fill="#858589"/><path d="M647 695.0 L1348 290.5" stroke="#9C9CA0" stroke-width="3" fill="none" /><path d="M647 690.1 L1348 285.6" stroke="#181818" stroke-width="1.2" fill="none" /><path d="M647 691.5 L1348 287" stroke="#C8C8CC" stroke-width="1.1" fill="none" /><path d="M647 692.9 L1348 288.4" stroke="#181818" stroke-width="1.2" fill="none" /><path d="M1365 290.5 L1702 484.5" stroke="#9C9CA0" stroke-width="3" fill="none" /><path d="M1365 285.6 L1702 479.6" stroke="#181818" stroke-width="1.2" fill="none" /><path d="M1365 287 L1702 481" stroke="#C8C8CC" stroke-width="1.1" fill="none" /><path d="M1365 288.4 L1702 482.4" stroke="#181818" stroke-width="1.2" fill="none" /><path d="M647 715.0 L982.5 908.0" stroke="#9C9CA0" stroke-width="3" fill="none" /><path d="M647 710.1 L982.5 903.1" stroke="#181818" stroke-width="1.2" fill="none" /><path d="M647 711.5 L982.5 904.5" stroke="#C8C8CC" stroke-width="1.1" fill="none" /><path d="M647 712.9 L982.5 905.9" stroke="#181818" stroke-width="1.2" fill="none" /><path d="M1003 907.5 L1701.5 506.0" stroke="#9C9CA0" stroke-width="3" fill="none" /><path d="M1003 902.6 L1701.5 501.1" stroke="#181818" stroke-width="1.2" fill="none" /><path d="M1003 904 L1701.5 502.5" stroke="#C8C8CC" stroke-width="1.1" fill="none" /><path d="M1003 905.4 L1701.5 503.9" stroke="#181818" stroke-width="1.2" fill="none" /><path d="M667 701 L1356 303" stroke="#283040" stroke-width="1.2" fill="none" /><path d="M1356 303 L1682 492" stroke="#283040" stroke-width="1.2" fill="none" /><path d="M619 717 L982.5 927.5" stroke="#283040" stroke-width="1.2" fill="none" /><path d="M1003 927.5 L1730 507.5" stroke="#283040" stroke-width="1.2" fill="none" /><path d="M619 686 L619 717" stroke="#283040" stroke-width="1.2" fill="none" /><path d="M1730 477 L1730 507.5" stroke="#283040" stroke-width="1.2" fill="none" /><path d="M1348 267.5 L1348 288" stroke="#283040" stroke-width="1" fill="none" /><path d="M1365 267 L1365 288" stroke="#283040" stroke-width="1" fill="none" /><polygon points="984,914.5 992.5,909.5 1001,914.5 1001,925 992.5,920.5 984,925" fill="#B4B4BA"/><path d="M984 914.5 L992.5 909.5 L1001 914.5 M984 917.5 L992.5 912.5 L1001 917.5 M984 919 L992.5 924 L1001 919" stroke="#202830" stroke-width="0.9" fill="none"/><path d="M981.5 897 L981.5 927.5" stroke="#283040" stroke-width="1" fill="none" /><path d="M983.5 897 L983.5 926" stroke="#283040" stroke-width="1" fill="none" /><path d="M1001.5 897 L1001.5 926" stroke="#283040" stroke-width="1" fill="none" /><path d="M1003.5 897 L1003.5 927.5" stroke="#283040" stroke-width="1" fill="none" /><path d="M620.5 686 L620.5 697" stroke="#283040" stroke-width="1" fill="none" /><path d="M638.5 689 L638.5 708" stroke="#283040" stroke-width="1" fill="none" /><path d="M640.5 701 L640.5 709" stroke="#283040" stroke-width="1" fill="none" /><path d="M627.4 699.8 L635.3 695.3 M627.4 702.2 L635.3 697.7" stroke="#202830" stroke-width="0.9"/><path d="M1728.5 477 L1728.5 489" stroke="#283040" stroke-width="1" fill="none" /><path d="M1708.5 490 L1708.5 500" stroke="#283040" stroke-width="1" fill="none" /><path d="M1710.5 479 L1710.5 498" stroke="#283040" stroke-width="1" fill="none" /><path d="M538.5 954.5 L1810.5 220.5 M919.5 440.5 L1428.5 734" stroke="#2A8A50" stroke-width="1.8" fill="none"/><polygon points="630,692.5 1356,273 1718.5,482.4 993,901" fill="none" stroke="#000088" stroke-width="2.3"/><path d="M585.5 666.5 L630 692.5" stroke="#101820" stroke-width="1" fill="none" /><path d="M585.5 666.5 L928 469" stroke="#101820" stroke-width="1" fill="none" /><path d="M945 458.5 L1311.5 247.5" stroke="#101820" stroke-width="1" fill="none" /><path d="M1311.5 247.5 L1356 273" stroke="#101820" stroke-width="1" fill="none" /><path d="M545.5 741 L630 692.5" stroke="#101820" stroke-width="1" fill="none" /><path d="M545.5 741 L666 810.5" stroke="#101820" stroke-width="1" fill="none" /><path d="M686 822 L908 950" stroke="#101820" stroke-width="1" fill="none" /><path d="M908 950 L993 901" stroke="#101820" stroke-width="1" fill="none" /><polygon points="585.5,666.5 595.4117583111612,663.6703273720927 592.9140584496564,659.3388731818884" fill="none" stroke="#101820" stroke-width="1"/><polygon points="1311.5,247.5 1301.5882416888387,250.32967262790726 1304.0859415503435,254.66112681811165" fill="none" stroke="#101820" stroke-width="1"/><polygon points="545.5,741 552.9145454109961,748.1606226229483 555.4119507146191,743.8289985915444" fill="none" stroke="#101820" stroke-width="1"/><polygon points="908,950 900.5854545890039,942.8393773770517 898.0880492853809,947.1710014084556" fill="none" stroke="#101820" stroke-width="1"/><text x="923.5" y="468.3" font-family="Liberation Sans" font-size="12" fill="#3C4656" stroke="#3C4656" stroke-width="0.35">2000</text><text x="662" y="821.5" font-family="Liberation Sans" font-size="12" fill="#3C4656" stroke="#3C4656" stroke-width="0.35">1000</text><path d="M406.5 1112 V1098" stroke="#0010A0" stroke-width="2"/><polygon points="406,1088 400,1097 413,1097" fill="#0000F0"/><path d="M407 1113 L418 1106" stroke="#30C030" stroke-width="1.2"/><polygon points="416,1101 427,1101 422,1110" fill="#00E000"/><path d="M407 1113 L418 1120" stroke="#802020" stroke-width="1.2"/><polygon points="421,1116 416,1125 427,1125" fill="#F00000"/></svg>
<div class="a" style="left:323px;top:240px;width:38px;height:1px;background:#808080"></div>
<div class="a" style="left:323px;top:241px;width:38px;height:1px;background:#fff"></div>
<div class="a" style="left:323px;top:268px;width:38px;height:1px;background:#808080"></div>
<div class="a" style="left:323px;top:269px;width:38px;height:1px;background:#fff"></div>
<div class="a" style="left:323px;top:296px;width:38px;height:1px;background:#808080"></div>
<div class="a" style="left:323px;top:297px;width:38px;height:1px;background:#fff"></div>
<div class="a" style="left:323px;top:324px;width:38px;height:1px;background:#808080"></div>
<div class="a" style="left:323px;top:325px;width:38px;height:1px;background:#fff"></div>
<div class="a" style="left:323px;top:682px;width:38px;height:1px;background:#808080"></div>
<div class="a" style="left:323px;top:683px;width:38px;height:1px;background:#fff"></div>
<div class="a" style="left:323px;top:732px;width:38px;height:1px;background:#808080"></div>
<div class="a" style="left:323px;top:733px;width:38px;height:1px;background:#fff"></div>
<svg class="a" style="left:324px;top:109px;" width="17" height="17" viewBox="0 0 17 17"><path d="M1 6 L1 15 L9 15 L12 9 L4 9 Z" fill="#F0D8A8" stroke="#806030"/><path d="M3.5 3.5 L5.5 1.5 H10.5 L8.5 3.5 Z" fill="#F4F8FC" stroke="#000" stroke-width="1"/><path d="M8.5 3.5 L10.5 1.5 V6.5 L8.5 8.5 Z" fill="#5880B0" stroke="#000" stroke-width="1"/><rect x="3.5" y="3.5" width="5" height="5" fill="#A8C8EC" stroke="#000" stroke-width="1"/><path d="M10 3 C14 4 14 8 13 12" stroke="#000" stroke-width="1.5" fill="none"/><path d="M10 11 L16 11 L13 15 Z" fill="#000"/></svg>
<svg class="a" style="left:324px;top:130px;" width="17" height="17" viewBox="0 0 17 17"><path d="M1.5 5.5 L4.5 2.5 H10.5 L7.5 5.5 Z" fill="#F4F8FC" stroke="#000" stroke-width="1"/><path d="M7.5 5.5 L10.5 2.5 V8.5 L7.5 11.5 Z" fill="#5880B0" stroke="#000" stroke-width="1"/><rect x="1.5" y="5.5" width="6" height="6" fill="#A8C8EC" stroke="#000" stroke-width="1"/><path d="M4 15 L14 5 L16 7 L6 16 Z" fill="#F8D040" stroke="#806000" stroke-width="0.8"/><path d="M2 16 L5 13" stroke="#000" stroke-width="1.5"/></svg>
<svg class="a" style="left:324px;top:152px;" width="17" height="17" viewBox="0 0 17 17"><path d="M5.5 3.5 L7.5 1.5 H12.5 L10.5 3.5 Z" fill="#F4F8FC" stroke="#000" stroke-width="1"/><path d="M10.5 3.5 L12.5 1.5 V6.5 L10.5 8.5 Z" fill="#C0A010" stroke="#000" stroke-width="1"/><rect x="5.5" y="3.5" width="5" height="5" fill="#F8E040" stroke="#000" stroke-width="1"/><path d="M6 12 L15 8 L16 10 L7 14 Z" fill="#B8D0F0" stroke="#000" stroke-width="0.8"/><path d="M8 7 L2 14" stroke="#E00000" stroke-width="2"/><path d="M0 11 L1 16 L6 15 Z" fill="#E00000"/></svg>
<svg class="a" style="left:324px;top:174px;" width="17" height="17" viewBox="0 0 17 17"><path d="M1.5 3.5 L3.5 1.5 H7.5 L5.5 3.5 Z" fill="#F4F8FC" stroke="#000" stroke-width="1"/><path d="M5.5 3.5 L7.5 1.5 V5.5 L5.5 7.5 Z" fill="#C0A010" stroke="#000" stroke-width="1"/><rect x="1.5" y="3.5" width="4" height="4" fill="#F8E040" stroke="#000" stroke-width="1"/><path d="M10.5 3.5 L12.5 1.5 H16.5 L14.5 3.5 Z" fill="#F4F8FC" stroke="#000" stroke-width="1"/><path d="M14.5 3.5 L16.5 1.5 V5.5 L14.5 7.5 Z" fill="#5880B0" stroke="#000" stroke-width="1"/><rect x="10.5" y="3.5" width="4" height="4" fill="#A8C8EC" stroke="#000" stroke-width="1"/><path d="M1.5 12.5 L3.5 10.5 H7.5 L5.5 12.5 Z" fill="#F4F8FC" stroke="#000" stroke-width="1"/><path d="M5.5 12.5 L7.5 10.5 V14.5 L5.5 16.5 Z" fill="#5880B0" stroke="#000" stroke-width="1"/><rect x="1.5" y="12.5" width="4" height="4" fill="#A8C8EC" stroke="#000" stroke-width="1"/><path d="M10.5 12.5 L12.5 10.5 H16.5 L14.5 12.5 Z" fill="#F4F8FC" stroke="#000" stroke-width="1"/><path d="M14.5 12.5 L16.5 10.5 V14.5 L14.5 16.5 Z" fill="#5880B0" stroke="#000" stroke-width="1"/><rect x="10.5" y="12.5" width="4" height="4" fill="#A8C8EC" stroke="#000" stroke-width="1"/><path d="M7 4 H10 M4 7 V10 M7 13 H10" stroke="#000"/></svg>
<svg class="a" style="left:324px;top:196px;" width="17" height="17" viewBox="0 0 17 17"><rect x="1.5" y="3.5" width="5" height="11" rx="1.5" fill="#F8E040" stroke="#000" stroke-width="1.2"/><path d="M1.5 9 H6.5" stroke="#000"/><rect x="10.5" y="3.5" width="5" height="11" rx="1.5" fill="#A8C8EC" stroke="#000" stroke-width="1.2"/><path d="M10.5 9 H15.5" stroke="#000"/><path d="M8.5 1 V16" stroke="#F08020"/></svg>
<svg class="a" style="left:324px;top:217px;" width="17" height="17" viewBox="0 0 17 17"><rect x="1.5" y="4.5" width="5" height="10" rx="1.5" fill="#F8E040" stroke="#000" stroke-width="1.2"/><path d="M1.5 9.5 H6.5" stroke="#000"/><rect x="9.5" y="3.5" width="5" height="11" rx="1.5" fill="#A8C8EC" stroke="#000" stroke-width="1.2"/></svg>
<svg class="a" style="left:324px;top:246px;" width="17" height="17" viewBox="0 0 17 17"><rect x="1.5" y="4.5" width="3" height="8" fill="#fff" stroke="#000" stroke-width="1.2"/><rect x="4.5" y="5.5" width="11" height="6" rx="2" fill="#7898C0" stroke="#000" stroke-width="1.2"/><rect x="8.5" y="1.5" width="3" height="4" fill="#7898C0" stroke="#000" stroke-width="1.2"/><rect x="8.5" y="11.5" width="3" height="4" fill="#7898C0" stroke="#000" stroke-width="1.2"/></svg>
<svg class="a" style="left:324px;top:274px;" width="17" height="17" viewBox="0 0 17 17"><rect x="1.5" y="9.5" width="6" height="6" fill="#fff" stroke="#000" stroke-width="1.2"/><rect x="7.5" y="1.5" width="8" height="6" fill="#80A8D8" stroke="#000" stroke-width="1.2"/><path d="M8 2 V15" stroke="#C02030" stroke-width="2"/></svg>
<svg class="a" style="left:324px;top:302px;" width="17" height="17" viewBox="0 0 17 17"><rect x="9.5" y="1.5" width="6" height="6" fill="#A8C8EC" stroke="#000" stroke-width="1.2"/><rect x="1.5" y="9.5" width="6" height="6" fill="#F8E040" stroke="#000" stroke-width="1.2"/><path d="M2 8 L8 2" stroke="#E02000" stroke-width="1.6"/><path d="M1 5 V9 H5 M5 1 H9 V5" stroke="#E02000" stroke-width="1.3" fill="none"/></svg>
<svg class="a" style="left:324px;top:329px;" width="17" height="17" viewBox="0 0 17 17"><path d="M2 3 H13" stroke="#E00000" stroke-width="1.8"/><path d="M11 0 L16 3 L11 6 Z" fill="#E00000"/><path d="M1.5 11.5 L3.5 9.5 H7.5 L5.5 11.5 Z" fill="#F4F8FC" stroke="#000" stroke-width="1"/><path d="M5.5 11.5 L7.5 9.5 V13.5 L5.5 15.5 Z" fill="#E0DCC8" stroke="#000" stroke-width="1"/><rect x="1.5" y="11.5" width="4" height="4" fill="#F0ECD8" stroke="#000" stroke-width="1"/><path d="M8.5 10.5 L10.5 8.5 H16.5 L14.5 10.5 Z" fill="#F4F8FC" stroke="#000" stroke-width="1"/><path d="M14.5 10.5 L16.5 8.5 V14.5 L14.5 16.5 Z" fill="#C0A010" stroke="#000" stroke-width="1"/><rect x="8.5" y="10.5" width="6" height="6" fill="#F8E040" stroke="#000" stroke-width="1"/></svg>
<svg class="a" style="left:324px;top:351px;" width="17" height="17" viewBox="0 0 17 17"><path d="M1.5 12.5 L3.5 10.5 H7.5 L5.5 12.5 Z" fill="#F4F8FC" stroke="#000" stroke-width="1"/><path d="M5.5 12.5 L7.5 10.5 V14.5 L5.5 16.5 Z" fill="#E0DCC8" stroke="#000" stroke-width="1"/><rect x="1.5" y="12.5" width="4" height="4" fill="#F0ECD8" stroke="#000" stroke-width="1"/><path d="M7 11 L11 7 L15 11 L11 15 Z" fill="#F8E040" stroke="#000" stroke-width="1.2"/><path d="M8 2 C12 1 14 3 13 7" stroke="#E00000" stroke-width="1.8" fill="none"/><path d="M10 6 L15 5 L13 10 Z" fill="#E00000"/></svg>
<svg class="a" style="left:324px;top:373px;" width="17" height="17" viewBox="0 0 17 17"><path d="M2 1 H0.5 V16 H2 M15 1 H16.5 V16 H15" stroke="#E03020" fill="none"/><rect x="3.5" y="2.5" width="5" height="12" fill="#F8E040" stroke="#000" stroke-width="1.2"/><rect x="8.5" y="2.5" width="5" height="12" fill="none" stroke="#6080B0" stroke-dasharray="1 1"/><path d="M3.5 8.5 H8.5" stroke="#000"/></svg>
<svg class="a" style="left:324px;top:395px;" width="17" height="17" viewBox="0 0 17 17"><rect x="5.5" y="1.5" width="10" height="10" fill="#E8E8F0" stroke="#000" stroke-width="1.2"/><rect x="1.5" y="5.5" width="10" height="10" fill="#F0A060" stroke="#000" stroke-width="1.2"/><rect x="5.5" y="5.5" width="6" height="6" fill="#F8C090"/></svg>
<svg class="a" style="left:324px;top:417px;" width="17" height="17" viewBox="0 0 17 17"><rect x="4.5" y="1.5" width="11" height="11" fill="#E0E8F4" stroke="#000" stroke-width="1.2"/><path d="M1 16 L12 5" stroke="#E08020" stroke-width="1.8"/></svg>
<svg class="a" style="left:324px;top:439px;" width="17" height="17" viewBox="0 0 17 17"><path d="M8.5 1 L11 6 L16 8.5 L11 11 L8.5 16 L6 11 L1 8.5 L6 6 Z" fill="#F09020"/><circle cx="8.5" cy="8.5" r="2.5" fill="#F8E8C0" stroke="#000" stroke-width="0.6"/></svg>
<svg class="a" style="left:324px;top:461px;" width="17" height="17" viewBox="0 0 17 17"><path d="M1.5 6.5 L4.5 3.5 H12.5 L9.5 6.5 Z" fill="#F4F8FC" stroke="#000" stroke-width="1"/><path d="M9.5 6.5 L12.5 3.5 V11.5 L9.5 14.5 Z" fill="#C0A010" stroke="#000" stroke-width="1"/><rect x="1.5" y="6.5" width="8" height="8" fill="#F8E040" stroke="#000" stroke-width="1"/><path d="M14 15 V3" stroke="#E00000" stroke-width="1.6"/><path d="M11.5 5 L14 0 L16.5 5 Z" fill="#E00000"/></svg>
<svg class="a" style="left:324px;top:483px;" width="17" height="17" viewBox="0 0 17 17"><ellipse cx="8" cy="11" rx="7" ry="4" fill="#6090C8" stroke="#000" stroke-width="1.2"/><ellipse cx="8" cy="9" rx="7" ry="3.5" fill="#A8C8EC" stroke="#000" stroke-width="1.2"/><ellipse cx="8" cy="9" rx="3" ry="1.5" fill="#405880"/><path d="M2 5 C4 1 12 1 14 5" stroke="#E00000" stroke-width="1.6" fill="none"/></svg>
<svg class="a" style="left:324px;top:505px;" width="17" height="17" viewBox="0 0 17 17"><path d="M1.5 5.5 L5.5 1.5 H16.5 L12.5 5.5 Z" fill="#F4F8FC" stroke="#000" stroke-width="1"/><path d="M12.5 5.5 L16.5 1.5 V12.5 L12.5 16.5 Z" fill="#C0A010" stroke="#000" stroke-width="1"/><rect x="1.5" y="5.5" width="11" height="11" fill="#F8E040" stroke="#000" stroke-width="1"/><circle cx="6" cy="10.5" r="3" fill="#5080B0" stroke="#000"/></svg>
<svg class="a" style="left:324px;top:528px;" width="17" height="17" viewBox="0 0 17 17"><path d="M2 6 C2 1 14 1 14 5 C14 9 5 6 5 10" stroke="#6088C0" stroke-width="3" fill="none"/><path d="M7.5 10.5 L9.5 8.5 H15.5 L13.5 10.5 Z" fill="#F4F8FC" stroke="#000" stroke-width="1"/><path d="M13.5 10.5 L15.5 8.5 V14.5 L13.5 16.5 Z" fill="#C0A010" stroke="#000" stroke-width="1"/><rect x="7.5" y="10.5" width="6" height="6" fill="#F8E040" stroke="#000" stroke-width="1"/></svg>
<svg class="a" style="left:324px;top:550px;" width="17" height="17" viewBox="0 0 17 17"><path d="M1.5 7 L5 2.5 H12 L15.5 6 V12 L12 15.5 H1.5 Z" fill="#F8E040" stroke="#000" stroke-width="1.2"/><path d="M1.5 7 H10 C12 7 12 5 15.5 6 M10 7 V15.5" stroke="#000" fill="none"/><path d="M5 2.5 H12 L15.5 6 C12 5 12 7 10 7 H1.5 Z" fill="#7898C0"/></svg>
<svg class="a" style="left:324px;top:572px;" width="17" height="17" viewBox="0 0 17 17"><path d="M1.5 8 L7 2 L11 2 L15.5 7 V12 L12 15.5 H1.5 Z" fill="#F8E040" stroke="#000" stroke-width="1.2"/><path d="M7 2 L11 2 L15.5 7 L10 8 L1.5 8 Z" fill="#7898C0" stroke="#000" stroke-width="1.2"/></svg>
<svg class="a" style="left:324px;top:594px;" width="17" height="17" viewBox="0 0 17 17"><path d="M1.5 5.5 L5.5 1.5 H16.5 L12.5 5.5 Z" fill="#F4F8FC" stroke="#000" stroke-width="1"/><path d="M12.5 5.5 L16.5 1.5 V12.5 L12.5 16.5 Z" fill="#90B0D8" stroke="#000" stroke-width="1"/><rect x="1.5" y="5.5" width="11" height="11" fill="#6890C0" stroke="#000" stroke-width="1"/><rect x="2" y="7" width="4" height="8" fill="#F8E040"/><path d="M5 10 H12" stroke="#E00000" stroke-width="1.6"/><path d="M10 7 L14 10 L10 13 Z" fill="#E00000"/></svg>
<svg class="a" style="left:324px;top:616px;" width="17" height="17" viewBox="0 0 17 17"><rect x="1.5" y="1.5" width="4" height="4" fill="#F8E040" stroke="#000"/><rect x="11.5" y="1.5" width="4" height="4" fill="#A8C8EC" stroke="#000"/><rect x="1.5" y="11.5" width="4" height="4" fill="#A8C8EC" stroke="#000"/><rect x="11.5" y="11.5" width="4" height="4" fill="#A8C8EC" stroke="#000"/><path d="M6 3.5 H11 M3.5 6 V11 M6 13.5 H11" stroke="#000" stroke-dasharray="1 1"/></svg>
<svg class="a" style="left:324px;top:638px;" width="17" height="17" viewBox="0 0 17 17"><rect x="6.5" y="0.5" width="4" height="4" fill="#F8E040" stroke="#000"/><rect x="0.5" y="6.5" width="4" height="4" fill="#A8C8EC" stroke="#000"/><rect x="12.5" y="6.5" width="4" height="4" fill="#A8C8EC" stroke="#000"/><rect x="6.5" y="12.5" width="4" height="4" fill="#A8C8EC" stroke="#000"/><circle cx="8.5" cy="8.5" r="6" fill="none" stroke="#000" stroke-dasharray="1 1.2"/></svg>
<svg class="a" style="left:324px;top:660px;" width="17" height="17" viewBox="0 0 17 17"><path d="M1.5 2.5 H5 L7 5 V15.5 H1.5 Z" fill="#F8E040" stroke="#000" stroke-width="1.2"/><path d="M15.5 2.5 H12 L10 5 V15.5 H15.5 Z" fill="#A8C8EC" stroke="#000" stroke-width="1.2"/><path d="M8.5 1 V16" stroke="#E00000" stroke-width="1.2"/></svg>
<svg class="a" style="left:324px;top:689px;" width="17" height="17" viewBox="0 0 17 17"><path d="M1 13 C3 14 4 12 5 8 L7 3 C8 1 10 1 11 2 M4 6 H9" stroke="#000" stroke-width="1.3" fill="none"/><path d="M9 10 L14 16 M14 10 L9 16" stroke="#000" stroke-width="1.3"/></svg>
<svg class="a" style="left:324px;top:709px;" width="17" height="17" viewBox="0 0 17 17"><circle cx="8.5" cy="8.5" r="7" fill="#C8E0F4" stroke="#102040" stroke-width="1.4"/><path d="M3 6 A6 6 0 0 1 11 2.5 L9 8 Z" fill="#70A8D8"/><path d="M4.5 4.5 L12.5 12.5" stroke="#D83040" stroke-width="2.6"/></svg>
<svg class="a" style="left:324px;top:737px;" width="17" height="17" viewBox="0 0 17 17"><rect x="1.5" y="0.5" width="3" height="3" fill="#D8D8D8" stroke="#000"/><rect x="0.5" y="3.5" width="5" height="3" fill="#F8D060" stroke="#C08000"/><path d="M3 6 V16 M3 9.5 H6 M3 12.5 H6 M3 15.5 H6" stroke="#000"/><path d="M7.5 5 V16" stroke="#000"/><path d="M8 5.5 H16 M8 8.5 H16 M8 11.5 H16 M8 14.5 H16" stroke="#000" stroke-width="1.2"/><path d="M10 5 V16" stroke="#000" stroke-dasharray="1 1"/></svg>
<svg class="a" style="left:352px;top:310px;" width="5" height="3" viewBox="0 0 5 3"><path d="M0 0 H5 L2.5 3 Z" fill="#000"/></svg>
<svg class="a" style="left:352px;top:381px;" width="5" height="3" viewBox="0 0 5 3"><path d="M0 0 H5 L2.5 3 Z" fill="#000"/></svg>
<div class="a" style="left:2px;top:1174px;width:52px;height:22px;background:#D4D0C8;border-top:1px solid #fff;border-left:1px solid #fff;border-right:1px solid #404040;border-bottom:1px solid #404040"></div>
<div class="a" style="left:3px;top:1194px;width:50px;height:1px;background:#808080"></div>
<div class="a" style="left:52px;top:1175px;width:1px;height:20px;background:#808080"></div>
<svg class="a" style="left:4px;top:1176px;" width="16" height="15" viewBox="0 0 16 15"><path d="M3 1 C5 0 7 1 8 1.5 L7 7 C5 6 3 6 1.5 7 Z" fill="#F06020"/><path d="M9 2 C11 3 13 2 15 1.5 L14 7 C12 8 10 8 8 7 Z" fill="#70C020"/><path d="M1.5 8 C3 7 5 7 7 8 L6 14 C4 13 2 13 0.5 14 Z" fill="#4070E0"/><path d="M8 8.5 C10 9 12 9 14 8 L13 14 C11 15 9 14 7 14 Z" fill="#F0D020"/></svg>
<div class="t cr" style="left:22px;top:1179px;font-weight:bold;font-size:12px;line-height:14px">Start</div>
<svg class="a" style="left:62px;top:1178px;" width="16" height="16" viewBox="0 0 16 16"><rect x="1" y="1" width="14" height="14" rx="3" fill="#2870C0"/><circle cx="8" cy="8" r="5" fill="#D8F0FF"/><path d="M5 8 H11 M8 5 L11 8 L8 11" stroke="#2060A0" stroke-width="1.5" fill="none"/></svg>
<svg class="a" style="left:85px;top:1177px;" width="16" height="16" viewBox="0 0 16 16"><circle cx="8" cy="8" r="7" fill="#E86010"/><circle cx="9" cy="7" r="4.5" fill="#3050A0"/><path d="M2 6 C4 2 10 1 13 4 C10 3 6 5 5 9 C4 12 8 14 11 13 C7 16 2 12 2 6 Z" fill="#F8A020"/></svg>
<svg class="a" style="left:108px;top:1177px;" width="16" height="16" viewBox="0 0 16 16"><rect x="0.5" y="0.5" width="15" height="15" fill="#C02020" stroke="#801010"/><rect x="3" y="3" width="10" height="10" fill="#fff"/><rect x="5" y="5" width="6" height="6" fill="#C02020"/><rect x="7" y="7" width="2" height="2" fill="#fff"/></svg>
<div class="t cr" style="left:136px;top:1177px;font-weight:bold;font-size:12px">»</div>
<div class="a" style="left:148px;top:1174px;width:145px;height:22px;background:#D4D0C8;border-top:1px solid #fff;border-left:1px solid #fff;border-right:1px solid #404040;border-bottom:1px solid #404040"></div>
<div class="a" style="left:149px;top:1194px;width:143px;height:1px;background:#808080"></div>
<div class="a" style="left:291px;top:1175px;width:1px;height:20px;background:#808080"></div>
<svg class="a" style="left:152px;top:1177px;" width="16" height="16" viewBox="0 0 16 16"><rect x="0.5" y="0.5" width="15" height="15" fill="#C02020" stroke="#801010"/><rect x="3" y="3" width="10" height="10" fill="#fff"/><rect x="5" y="5" width="6" height="6" fill="#C02020"/></svg>
<div class="t cr" style="left:171px;top:1179px;">Q-Dir 3.47</div>
<div class="a" style="left:297px;top:1174px;width:145px;height:22px;background:#D4D0C8;border-top:1px solid #fff;border-left:1px solid #fff;border-right:1px solid #404040;border-bottom:1px solid #404040"></div>
<div class="a" style="left:298px;top:1194px;width:143px;height:1px;background:#808080"></div>
<div class="a" style="left:440px;top:1175px;width:1px;height:20px;background:#808080"></div>
<svg class="a" style="left:301px;top:1177px;" width="16" height="16" viewBox="0 0 16 16"><circle cx="8" cy="8" r="7.5" fill="#F8A010" stroke="#D07000"/><path d="M5 6 V12 M8 6 V12 M11 6 V12" stroke="#D06000" stroke-width="1.5"/></svg>
<div class="t cr" style="left:320px;top:1179px;">&gt; AW: Antwort: Mod...</div>
<div class="a" style="left:446px;top:1174px;width:145px;height:22px;background:#D4D0C8;border-top:1px solid #fff;border-left:1px solid #fff;border-right:1px solid #404040;border-bottom:1px solid #404040"></div>
<div class="a" style="left:447px;top:1194px;width:143px;height:1px;background:#808080"></div>
<div class="a" style="left:589px;top:1175px;width:1px;height:20px;background:#808080"></div>
<svg class="a" style="left:450px;top:1177px;" width="16" height="16" viewBox="0 0 16 16"><circle cx="8" cy="8" r="7" fill="#E86010"/><circle cx="9" cy="7" r="4.5" fill="#3050A0"/><path d="M2 6 C4 2 10 1 13 4 C10 3 6 5 5 9 C4 12 8 14 11 13 C7 16 2 12 2 6 Z" fill="#F8A020"/></svg>
<div class="t cr" style="left:469px;top:1179px;">Foren auf CAD.de - A...</div>
<div class="a" style="left:595px;top:1174px;width:145px;height:22px;background:#D4D0C8;border-top:1px solid #fff;border-left:1px solid #fff;border-right:1px solid #404040;border-bottom:1px solid #404040"></div>
<div class="a" style="left:596px;top:1194px;width:143px;height:1px;background:#808080"></div>
<div class="a" style="left:738px;top:1175px;width:1px;height:20px;background:#808080"></div>
<svg class="a" style="left:599px;top:1177px;" width="16" height="16" viewBox="0 0 16 16"><rect x="3.5" y="0.5" width="12" height="10" fill="#fff" stroke="#203060"/><rect x="0.5" y="4.5" width="12" height="11" fill="#fff" stroke="#203060"/><rect x="1" y="5" width="11" height="2" fill="#3060B0"/><path d="M2 9 H11 M2 11 H11 M2 13 H11 M5 8 V15" stroke="#203060" stroke-width="0.8"/></svg>
<div class="t cr" style="left:618px;top:1179px;">Stueli-MEB2 : Datenb...</div>
<div class="a" style="left:744px;top:1174px;width:145px;height:22px;background:#D4D0C8;border-top:1px solid #fff;border-left:1px solid #fff;border-right:1px solid #404040;border-bottom:1px solid #404040"></div>
<div class="a" style="left:745px;top:1194px;width:143px;height:1px;background:#808080"></div>
<div class="a" style="left:887px;top:1175px;width:1px;height:20px;background:#808080"></div>
<svg class="a" style="left:748px;top:1177px;" width="16" height="16" viewBox="0 0 16 16"><rect x="0.5" y="1.5" width="14" height="13" fill="#fff" stroke="#203060"/><rect x="1" y="2" width="13" height="2" fill="#203060"/><rect x="3" y="6" width="3" height="2" fill="#203060"/><rect x="8" y="6" width="5" height="2" fill="none" stroke="#203060" stroke-width="0.8"/><rect x="3" y="10" width="3" height="2" fill="#203060"/><rect x="8" y="10" width="5" height="2" fill="none" stroke="#203060" stroke-width="0.8"/></svg>
<div class="t cr" style="left:767px;top:1179px;">Stückliste</div>
<div class="a" style="left:893px;top:1174px;width:145px;height:22px;background:#D4D0C8;border-top:1px solid #fff;border-left:1px solid #fff;border-right:1px solid #404040;border-bottom:1px solid #404040"></div>
<div class="a" style="left:894px;top:1194px;width:143px;height:1px;background:#808080"></div>
<div class="a" style="left:1036px;top:1175px;width:1px;height:20px;background:#808080"></div>
<svg class="a" style="left:897px;top:1177px;" width="16" height="16" viewBox="0 0 16 16"><rect x="0.5" y="1.5" width="14" height="13" fill="#fff" stroke="#203060"/><rect x="1" y="2" width="13" height="2" fill="#203060"/><rect x="3" y="6" width="3" height="2" fill="#203060"/><rect x="8" y="6" width="5" height="2" fill="none" stroke="#203060" stroke-width="0.8"/><rect x="3" y="10" width="3" height="2" fill="#203060"/><rect x="8" y="10" width="5" height="2" fill="none" stroke="#203060" stroke-width="0.8"/></svg>
<div class="t cr" style="left:916px;top:1179px;">Stückliste</div>
<div class="a" style="left:1042px;top:1174px;width:145px;height:22px;border-top:1px solid #404040;border-left:1px solid #404040;border-right:1px solid #fff;border-bottom:1px solid #fff;background-color:#ECEAE6;background-image:repeating-conic-gradient(#fff 0 25%, #D4D0C8 0 50%);background-size:2px 2px"></div>
<div class="a" style="left:1043px;top:1175px;width:143px;height:1px;background:#808080"></div>
<div class="a" style="left:1043px;top:1175px;width:1px;height:20px;background:#808080"></div>
<svg class="a" style="left:1051px;top:1178px;" width="16" height="16" viewBox="0 0 16 16"><rect x="0.5" y="0.5" width="15" height="15" fill="#F0A830" stroke="#C08020"/><circle cx="6" cy="9" r="3.5" fill="#ccc" stroke="#555"/><circle cx="10.5" cy="8" r="3.5" fill="#777" stroke="#333"/></svg>
<div class="t cr" style="left:1068px;top:1180px;font-weight:bold">Autodesk Inventor...</div>
<div class="a" style="left:1191px;top:1174px;width:145px;height:22px;background:#D4D0C8;border-top:1px solid #fff;border-left:1px solid #fff;border-right:1px solid #404040;border-bottom:1px solid #404040"></div>
<div class="a" style="left:1192px;top:1194px;width:143px;height:1px;background:#808080"></div>
<div class="a" style="left:1334px;top:1175px;width:1px;height:20px;background:#808080"></div>
<svg class="a" style="left:1195px;top:1177px;" width="16" height="16" viewBox="0 0 16 16"><path d="M1 9 C3 13 11 14 15 6 L13 3 C12 7 9 8 7 8 C5 8 3 7 1 9 Z" fill="#807870"/><circle cx="5" cy="8" r="1.3" fill="#fff"/><path d="M13 3 L15 0" stroke="#605850" stroke-width="1.5"/></svg>
<div class="t cr" style="left:1214px;top:1179px;">The GIMP</div>
<div class="a" style="left:1340px;top:1174px;width:145px;height:22px;background:#D4D0C8;border-top:1px solid #fff;border-left:1px solid #fff;border-right:1px solid #404040;border-bottom:1px solid #404040"></div>
<div class="a" style="left:1341px;top:1194px;width:143px;height:1px;background:#808080"></div>
<div class="a" style="left:1483px;top:1175px;width:1px;height:20px;background:#808080"></div>
<svg class="a" style="left:1344px;top:1177px;" width="16" height="16" viewBox="0 0 16 16"><path d="M1 9 C3 13 11 14 15 6 L13 3 C12 7 9 8 7 8 C5 8 3 7 1 9 Z" fill="#807870"/><circle cx="5" cy="8" r="1.3" fill="#fff"/><path d="M13 3 L15 0" stroke="#605850" stroke-width="1.5"/></svg>
<div class="t cr" style="left:1363px;top:1179px;">Pinsel</div>
<div class="a" style="left:1489px;top:1174px;width:145px;height:22px;background:#D4D0C8;border-top:1px solid #fff;border-left:1px solid #fff;border-right:1px solid #404040;border-bottom:1px solid #404040"></div>
<div class="a" style="left:1490px;top:1194px;width:143px;height:1px;background:#808080"></div>
<div class="a" style="left:1632px;top:1175px;width:1px;height:20px;background:#808080"></div>
<svg class="a" style="left:1493px;top:1177px;" width="16" height="16" viewBox="0 0 16 16"><rect x="1" y="3" width="3" height="11" fill="#fff"/><ellipse cx="9" cy="8.5" rx="6" ry="5" fill="#D0E0F0" stroke="#80A0C8" stroke-dasharray="1 1"/></svg>
<div class="t cr" style="left:1512px;top:1179px;">Rahmen_1.jpg-4.0 (R...</div>
<div class="a" style="left:1638px;top:1174px;width:145px;height:22px;background:#D4D0C8;border-top:1px solid #fff;border-left:1px solid #fff;border-right:1px solid #404040;border-bottom:1px solid #404040"></div>
<div class="a" style="left:1639px;top:1194px;width:143px;height:1px;background:#808080"></div>
<div class="a" style="left:1781px;top:1175px;width:1px;height:20px;background:#808080"></div>
<svg class="a" style="left:1642px;top:1177px;" width="16" height="16" viewBox="0 0 16 16"><rect x="1" y="3" width="3" height="11" fill="#fff"/><ellipse cx="9" cy="8.5" rx="6" ry="5" fill="#D0E0F0" stroke="#80A0C8" stroke-dasharray="1 1"/></svg>
<div class="t cr" style="left:1661px;top:1179px;">Rahmen_2.jpg-5.0 (R...</div>
<div class="a" style="left:1796px;top:1178px;width:16px;height:16px;background:#0A2A7A"></div>
<div class="t cr" style="left:1797px;top:1180px;color:#fff;font-size:11px;letter-spacing:-0.5px">DE</div>
<div class="a" style="left:1816px;top:1174px;width:1px;height:22px;background:#808080"></div>
<div class="a" style="left:1817px;top:1174px;width:1px;height:22px;background:#fff"></div>
<div class="a" style="left:1823px;top:1174px;width:94px;height:23px;border-top:1px solid #808080;border-left:1px solid #808080;border-right:1px solid #fff;border-bottom:1px solid #fff"></div>
<div class="t cr" style="left:1828px;top:1178px;font-weight:bold;font-size:13px">«</div>
<svg class="a" style="left:1841px;top:1178px;" width="16" height="16" viewBox="0 0 16 16"><rect x="0" y="0" width="16" height="16" fill="#E00010"/><path d="M3 14 C3 6 7 2 10 3 C13 4 13 9 12 13 C12 14 14 14 14 12" stroke="#fff" stroke-width="1.6" fill="none"/></svg>
<svg class="a" style="left:1859px;top:1178px;" width="16" height="16" viewBox="0 0 16 16"><rect x="0.5" y="0.5" width="15" height="15" fill="#F0F0F8" stroke="#7050C0"/><path d="M3 9 L8 4 L13 7 L9 13 Z" fill="#fff" stroke="#5040A0"/><path d="M10 10 L14 14" stroke="#40A040" stroke-width="2"/></svg>
<div class="t cr" style="left:1882px;top:1180px;">14:11</div>
<svg class="a" style="left:1900px;top:1154px;" width="17" height="17" viewBox="0 0 17 17"><ellipse cx="10" cy="6.5" rx="5" ry="3.5" transform="rotate(-50 10 6.5)" fill="#D0E4F8" stroke="#3868B0" stroke-width="1.2"/><path d="M9 7 L14 2" stroke="#3868B0"/><path d="M4 15.5 H13 M8 10 L6 15" stroke="#3868B0" stroke-width="1.5"/></svg>
</body></html>
